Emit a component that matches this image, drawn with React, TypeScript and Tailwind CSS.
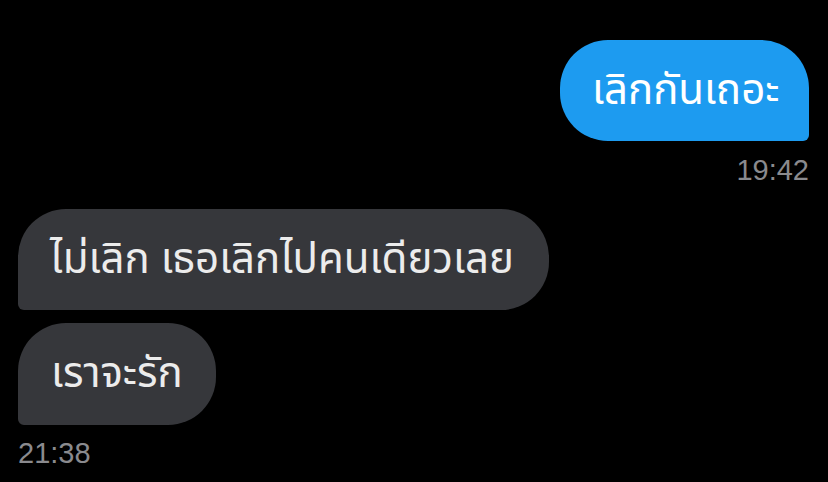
const messages = [
  { side: 'right', text: 'เลิกกันเถอะ', time: '19:42' },
  { side: 'left', text: 'ไม่เลิก เธอเลิกไปคนเดียวเลย' },
  { side: 'left', text: 'เราจะรัก', time: '21:38' },
];

export default function App() {
  return (
    <div
      className="w-[828px] h-[482px] bg-black overflow-hidden px-[18px] pt-[40px] flex flex-col"
      style={{ fontFamily: '"Noto Sans Thai", "Noto Sans", "DejaVu Sans", sans-serif' }}
    >
      {/* sent */}
      <div className="flex flex-col items-end pr-[1px]">
        <div className="bg-[#1d9bf0] text-white text-[42px] leading-[56px] w-[249px] h-[101px] flex items-center pl-[32px] whitespace-nowrap rounded-[48px] rounded-br-[6px]">
          {messages[0].text}
        </div>
        <div className="mt-[13px] text-[29px] leading-[32px] text-[#8a8a8e]" style={{ fontFamily: '"Liberation Sans", Arial, sans-serif' }}>
          {messages[0].time}
        </div>
      </div>

      {/* received */}
      <div className="flex flex-col items-start mt-[23px] gap-[13px]">
        <div className="bg-[#36373b] text-[#ececec] text-[42px] leading-[56px] w-[531px] h-[101px] flex items-center pl-[32px] whitespace-nowrap rounded-[48px] rounded-bl-[6px]">
          {messages[1].text}
        </div>
        <div className="bg-[#36373b] text-[#ececec] text-[42px] leading-[56px] w-[198px] h-[102px] flex items-center pl-[33px] whitespace-nowrap rounded-[48px] rounded-bl-[6px]">
          {messages[2].text}
        </div>
      </div>
      <div className="mt-[12px] text-[29px] leading-[32px] text-[#8a8a8e]" style={{ fontFamily: '"Liberation Sans", Arial, sans-serif' }}>
        {messages[2].time}
      </div>
    </div>
  );
}
